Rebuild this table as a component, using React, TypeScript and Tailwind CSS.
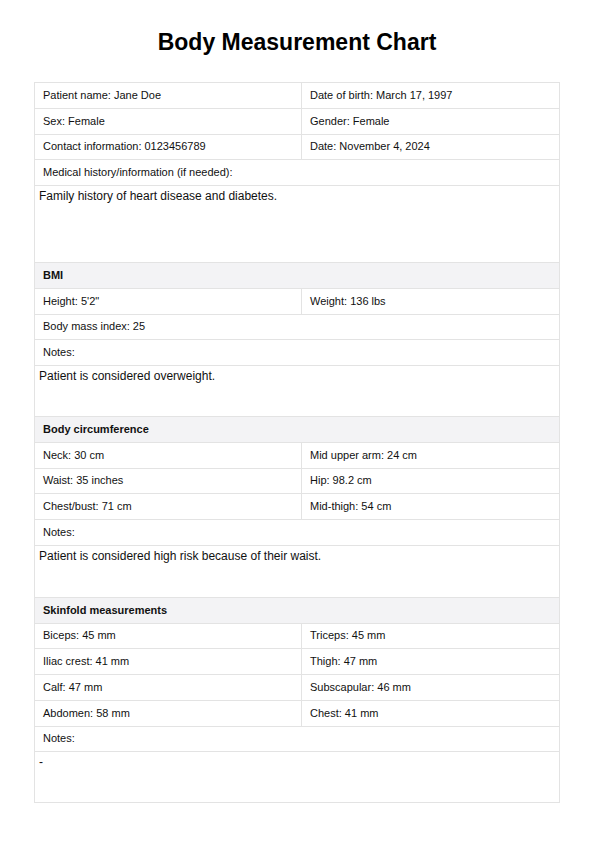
import React from "react";

type Row =
  | { kind: "pair"; left: string; right: string }
  | { kind: "single"; text: string }
  | { kind: "head"; text: string }
  | { kind: "area"; text: string; h: string };

const rows: Row[] = [
  { kind: "pair", left: "Patient name: Jane Doe", right: "Date of birth: March 17, 1997" },
  { kind: "pair", left: "Sex: Female", right: "Gender: Female" },
  { kind: "pair", left: "Contact information: 0123456789", right: "Date: November 4, 2024" },
  { kind: "single", text: "Medical history/information (if needed):" },
  { kind: "area", text: "Family history of heart disease and diabetes.", h: "h-[77px]" },
  { kind: "head", text: "BMI" },
  { kind: "pair", left: "Height: 5'2\"", right: "Weight: 136 lbs" },
  { kind: "single", text: "Body mass index: 25" },
  { kind: "single", text: "Notes:" },
  { kind: "area", text: "Patient is considered overweight.", h: "h-[51px]" },
  { kind: "head", text: "Body circumference" },
  { kind: "pair", left: "Neck: 30 cm", right: "Mid upper arm: 24 cm" },
  { kind: "pair", left: "Waist: 35 inches", right: "Hip: 98.2 cm" },
  { kind: "pair", left: "Chest/bust: 71 cm", right: "Mid-thigh: 54 cm" },
  { kind: "single", text: "Notes:" },
  { kind: "area", text: "Patient is considered high risk because of their waist.", h: "h-[52px]" },
  { kind: "head", text: "Skinfold measurements" },
  { kind: "pair", left: "Biceps: 45 mm", right: "Triceps: 45 mm" },
  { kind: "pair", left: "Iliac crest: 41 mm", right: "Thigh: 47 mm" },
  { kind: "pair", left: "Calf: 47 mm", right: "Subscapular: 46 mm" },
  { kind: "pair", left: "Abdomen: 58 mm", right: "Chest: 41 mm" },
  { kind: "single", text: "Notes:" },
  { kind: "area", text: "-", h: "h-[50px]" },
];

function TableRow({ row, last }: { row: Row; last: boolean }) {
  const line = last ? "" : "border-b border-[#e3e3e3]";
  if (row.kind === "pair") {
    return (
      <div className={`flex h-[25.75px] ${line}`}>
        <div className="w-[267px] border-r border-[#e3e3e3] pl-2 flex items-center">{row.left}</div>
        <div className="flex-1 pl-2 flex items-center">{row.right}</div>
      </div>
    );
  }
  if (row.kind === "single") {
    return <div className={`h-[25.75px] pl-2 flex items-center ${line}`}>{row.text}</div>;
  }
  if (row.kind === "head") {
    return (
      <div className={`h-[25.75px] pl-2 flex items-center bg-[#f3f3f5] font-bold ${line}`}>
        {row.text}
      </div>
    );
  }
  return (
    <div className={`${row.h} pl-1 pt-[3px] text-[12px] leading-[14px] ${line}`}>{row.text}</div>
  );
}

export default function App() {
  return (
    <div
      className="w-[594px] h-[841px] bg-white text-[#111] px-[34px]"
      style={{ fontFamily: '"Liberation Sans", Arial, sans-serif' }}
    >
      <h1 className="pt-[28px] h-[82px] text-center text-[23px] leading-[28px] font-bold text-black">
        Body Measurement Chart
      </h1>
      <div className="w-[526px] border border-[#e3e3e3] text-[11px] leading-[13px]">
        {rows.map((r, i) => (
          <TableRow key={i} row={r} last={i === rows.length - 1} />
        ))}
      </div>
    </div>
  );
}
